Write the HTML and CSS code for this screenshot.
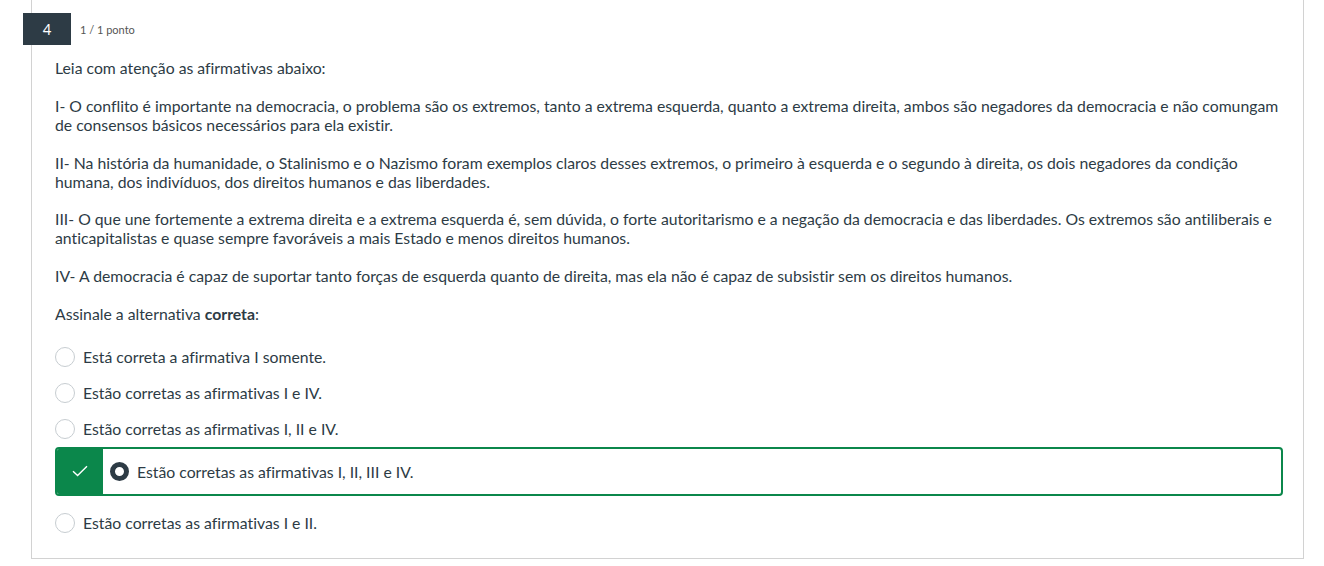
FILE: index.html
```html
<!DOCTYPE html>
<html lang="pt">
<head>
<meta charset="utf-8">
<title>Questão 4</title>
<link rel="stylesheet" href="styles.css">
</head>
<body>
<div class="card">
  <div class="qhead">
    <div class="qnum">4</div>
    <div class="qpts">1 / 1 ponto</div>
  </div>
  <div class="qtext">
    <p>Leia com atenção as afirmativas abaixo:</p>
    <p>I- O conflito é importante na democracia, o problema são os extremos, tanto a extrema esquerda, quanto a extrema direita, ambos são negadores da democracia e não comungam de consensos básicos necessários para ela existir.</p>
    <p>II- Na história da humanidade, o Stalinismo e o Nazismo foram exemplos claros desses extremos, o primeiro à esquerda e o segundo à direita, os dois negadores da condição humana, dos indivíduos, dos direitos humanos e das liberdades.</p>
    <p>III- O que une fortemente a extrema direita e a extrema esquerda é, sem dúvida, o forte autoritarismo e a negação da democracia e das liberdades. Os extremos são antiliberais e anticapitalistas e quase sempre favoráveis a mais Estado e menos direitos humanos.</p>
    <p>IV- A democracia é capaz de suportar tanto forças de esquerda quanto de direita, mas ela não é capaz de subsistir sem os direitos humanos.</p>
    <p class="last">Assinale a alternativa <strong>correta</strong>:</p>
  </div>
  <div class="options">
    <div class="opt"><span class="radio"></span><span>Está correta a afirmativa I somente.</span></div>
    <div class="opt"><span class="radio"></span><span>Estão corretas as afirmativas I e IV.</span></div>
    <div class="opt"><span class="radio"></span><span>Estão corretas as afirmativas I, II e IV.</span></div>
    <div class="opt-correct">
      <div class="mark">
        <svg width="16" height="12" viewBox="0 0 16 12"><path d="M1 6.2 L5.6 10.6 L15 1.2" fill="none" stroke="#fff" stroke-width="1.4"/></svg>
      </div>
      <span class="radio checked"></span><span>Estão corretas as afirmativas I, II, III e IV.</span>
    </div>
    <div class="opt"><span class="radio"></span><span>Estão corretas as afirmativas I e II.</span></div>
  </div>
</div>
</body>
</html>
```
FILE: styles.css
```css
*, *::before, *::after {
  box-sizing: border-box;
}
html, body {
  margin: 0;
  padding: 0;
  background: #fff;
}
body {
  font-family: Lato, "Noto Sans", sans-serif;
  font-size: 15.78px;
  color: #2d3b45;
  font-variant-ligatures: no-common-ligatures;
}
.card {
  margin-left: 31px;
  width: 1273px;
  border-left: 1px solid #d2d2d2;
  border-right: 1px solid #d2d2d2;
  border-bottom: 1px solid #d2d2d2;
  padding: 13px 20px 17px 23px;
}
.qhead {
  display: flex;
  align-items: center;
  margin-left: -32px;
  gap: 9px;
}
.qnum {
  width: 48px;
  height: 32px;
  background: #2d3b45;
  color: #fff;
  font-size: 15px;
  display: flex;
  align-items: center;
  justify-content: center;
}
.qpts {
  font-size: 11px;
  color: #555;
}
.qtext {
  margin-top: 13px;
  margin-right: -6px;
}
.qtext p {
  margin: 0 0 18.8px;
  line-height: 19px;
}
.qtext p.last {
  margin-bottom: 16px;
}
.qtext strong {
  font-weight: 700;
}
.options {
  display: flex;
  flex-direction: column;
}
.opt {
  height: 36px;
  display: flex;
  align-items: center;
  gap: 8px;
}
.radio {
  width: 20px;
  height: 20px;
  border-radius: 50%;
  border: 1px solid #c7cdd1;
  background: #fff;
  flex: none;
}
.radio.checked {
  width: 19px;
  height: 19px;
  border: 5px solid #2d3b45;
}
.opt-correct {
  height: 49px;
  border: 2px solid #0b874b;
  border-radius: 4px;
  display: flex;
  align-items: center;
  gap: 8px;
  margin-bottom: 9px;
  overflow: hidden;
}
.mark {
  width: 46px;
  align-self: stretch;
  background: #0b874b;
  display: flex;
  align-items: center;
  justify-content: center;
  margin-right: -1px;
}
```
